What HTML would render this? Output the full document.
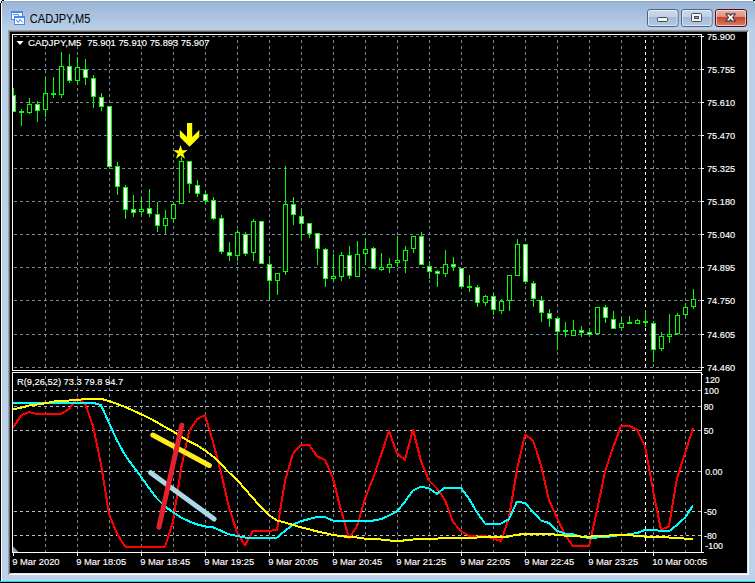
<!DOCTYPE html>
<html><head><meta charset="utf-8"><title>CADJPY,M5</title>
<style>html,body{margin:0;padding:0;background:#000;overflow:hidden}svg{display:block}text{font-family:"Liberation Sans",Arial,sans-serif}</style></head><body>
<svg width="755" height="583" viewBox="0 0 755 583">
<defs>
<linearGradient id="fr" x1="0" y1="0" x2="0" y2="1" gradientUnits="objectBoundingBox"><stop offset="0" stop-color="#98b3d3"/><stop offset="0.0515" stop-color="#bad0ea"/><stop offset="1" stop-color="#bcd1ea"/></linearGradient>
<linearGradient id="bt" x1="0" y1="0" x2="0" y2="1"><stop offset="0" stop-color="#c9d9ec"/><stop offset="0.44" stop-color="#bfd1e7"/><stop offset="0.45" stop-color="#a3bad6"/><stop offset="1" stop-color="#b4c9e2"/></linearGradient>
<linearGradient id="cl" x1="0" y1="0" x2="0" y2="1"><stop offset="0" stop-color="#edb3a6"/><stop offset="0.44" stop-color="#de8f7e"/><stop offset="0.45" stop-color="#c0442a"/><stop offset="1" stop-color="#dc8068"/></linearGradient>
<clipPath id="mc"><rect x="13" y="35" width="688" height="335"/></clipPath>
<clipPath id="ic"><rect x="13" y="373" width="688" height="179"/></clipPath>
</defs>
<rect x="0" y="0" width="755" height="583" fill="url(#fr)"/>
<g shape-rendering="crispEdges">
<rect x="0" y="1" width="755" height="1" fill="#90abcc"/>
<rect x="0" y="0" width="755" height="1" fill="#fff"/>
<rect x="0" y="0" width="1" height="583" fill="#000"/>
<rect x="1" y="1" width="1" height="580" fill="#fff"/>
<rect x="0" y="581" width="755" height="1" fill="#22d8f2"/>
<rect x="0" y="582" width="755" height="1" fill="#000"/>
<rect x="0" y="0" width="2" height="3" fill="#e8f0fa"/><rect x="2" y="0" width="2" height="1" fill="#000"/><rect x="1" y="1" width="1" height="2" fill="#000"/><rect x="2" y="1" width="1" height="1" fill="#fff"/>
<rect x="753" y="0" width="2" height="1" fill="#000"/><rect x="754" y="1" width="1" height="2" fill="#b0eef6"/>
<rect x="8" y="30" width="741" height="545" fill="#a0a0a0"/>
<rect x="9" y="31" width="740" height="544" fill="#fff"/>
<rect x="9" y="31" width="739" height="543" fill="#696969"/>
<rect x="10" y="32" width="738" height="542" fill="#e3e3e3"/>
<rect x="10" y="32" width="737" height="541" fill="#000"/>
</g>
<g shape-rendering="crispEdges" stroke="#778899" stroke-width="1" fill="none">
<line x1="14" y1="36.5" x2="701" y2="36.5" stroke-dasharray="3,3"/>
<line x1="14" y1="69.5" x2="701" y2="69.5" stroke-dasharray="3,3"/>
<line x1="14" y1="102.5" x2="701" y2="102.5" stroke-dasharray="3,3"/>
<line x1="14" y1="135.5" x2="701" y2="135.5" stroke-dasharray="3,3"/>
<line x1="14" y1="168.5" x2="701" y2="168.5" stroke-dasharray="3,3"/>
<line x1="14" y1="201.5" x2="701" y2="201.5" stroke-dasharray="3,3"/>
<line x1="14" y1="234.5" x2="701" y2="234.5" stroke-dasharray="3,3"/>
<line x1="14" y1="267.5" x2="701" y2="267.5" stroke-dasharray="3,3"/>
<line x1="14" y1="300.5" x2="701" y2="300.5" stroke-dasharray="3,3"/>
<line x1="14" y1="334.5" x2="701" y2="334.5" stroke-dasharray="3,3"/>
<line x1="14" y1="367.5" x2="701" y2="367.5" stroke-dasharray="3,3"/>
<line x1="14" y1="390.5" x2="701" y2="390.5" stroke="#c0c0c0" stroke-dasharray="3,3"/>
<line x1="14" y1="406.5" x2="701" y2="406.5" stroke="#c0c0c0" stroke-dasharray="3,3"/>
<line x1="14" y1="430.5" x2="701" y2="430.5" stroke="#c0c0c0" stroke-dasharray="3,3"/>
<line x1="14" y1="471.5" x2="701" y2="471.5" stroke="#c0c0c0" stroke-dasharray="3,3"/>
<line x1="14" y1="511.5" x2="701" y2="511.5" stroke="#c0c0c0" stroke-dasharray="3,3"/>
<line x1="14" y1="535.5" x2="701" y2="535.5" stroke="#c0c0c0" stroke-dasharray="3,3"/>
<line x1="45.5" y1="40" x2="45.5" y2="370" stroke-dasharray="3,3"/>
<line x1="45.5" y1="376" x2="45.5" y2="552" stroke-dasharray="3,3"/>
<line x1="77.5" y1="40" x2="77.5" y2="370" stroke-dasharray="3,3"/>
<line x1="77.5" y1="376" x2="77.5" y2="552" stroke-dasharray="3,3"/>
<line x1="109.5" y1="40" x2="109.5" y2="370" stroke-dasharray="3,3"/>
<line x1="109.5" y1="376" x2="109.5" y2="552" stroke-dasharray="3,3"/>
<line x1="141.5" y1="40" x2="141.5" y2="370" stroke-dasharray="3,3"/>
<line x1="141.5" y1="376" x2="141.5" y2="552" stroke-dasharray="3,3"/>
<line x1="173.5" y1="40" x2="173.5" y2="370" stroke-dasharray="3,3"/>
<line x1="173.5" y1="376" x2="173.5" y2="552" stroke-dasharray="3,3"/>
<line x1="205.5" y1="40" x2="205.5" y2="370" stroke-dasharray="3,3"/>
<line x1="205.5" y1="376" x2="205.5" y2="552" stroke-dasharray="3,3"/>
<line x1="237.5" y1="40" x2="237.5" y2="370" stroke-dasharray="3,3"/>
<line x1="237.5" y1="376" x2="237.5" y2="552" stroke-dasharray="3,3"/>
<line x1="269.5" y1="40" x2="269.5" y2="370" stroke-dasharray="3,3"/>
<line x1="269.5" y1="376" x2="269.5" y2="552" stroke-dasharray="3,3"/>
<line x1="301.5" y1="40" x2="301.5" y2="370" stroke-dasharray="3,3"/>
<line x1="301.5" y1="376" x2="301.5" y2="552" stroke-dasharray="3,3"/>
<line x1="333.5" y1="40" x2="333.5" y2="370" stroke-dasharray="3,3"/>
<line x1="333.5" y1="376" x2="333.5" y2="552" stroke-dasharray="3,3"/>
<line x1="365.5" y1="40" x2="365.5" y2="370" stroke-dasharray="3,3"/>
<line x1="365.5" y1="376" x2="365.5" y2="552" stroke-dasharray="3,3"/>
<line x1="397.5" y1="40" x2="397.5" y2="370" stroke-dasharray="3,3"/>
<line x1="397.5" y1="376" x2="397.5" y2="552" stroke-dasharray="3,3"/>
<line x1="429.5" y1="40" x2="429.5" y2="370" stroke-dasharray="3,3"/>
<line x1="429.5" y1="376" x2="429.5" y2="552" stroke-dasharray="3,3"/>
<line x1="461.5" y1="40" x2="461.5" y2="370" stroke-dasharray="3,3"/>
<line x1="461.5" y1="376" x2="461.5" y2="552" stroke-dasharray="3,3"/>
<line x1="493.5" y1="40" x2="493.5" y2="370" stroke-dasharray="3,3"/>
<line x1="493.5" y1="376" x2="493.5" y2="552" stroke-dasharray="3,3"/>
<line x1="525.5" y1="40" x2="525.5" y2="370" stroke-dasharray="3,3"/>
<line x1="525.5" y1="376" x2="525.5" y2="552" stroke-dasharray="3,3"/>
<line x1="557.5" y1="40" x2="557.5" y2="370" stroke-dasharray="3,3"/>
<line x1="557.5" y1="376" x2="557.5" y2="552" stroke-dasharray="3,3"/>
<line x1="589.5" y1="40" x2="589.5" y2="370" stroke-dasharray="3,3"/>
<line x1="589.5" y1="376" x2="589.5" y2="552" stroke-dasharray="3,3"/>
<line x1="621.5" y1="40" x2="621.5" y2="370" stroke-dasharray="3,3"/>
<line x1="621.5" y1="376" x2="621.5" y2="552" stroke-dasharray="3,3"/>
<line x1="653.5" y1="40" x2="653.5" y2="370" stroke-dasharray="3,3"/>
<line x1="653.5" y1="376" x2="653.5" y2="552" stroke-dasharray="3,3"/>
<line x1="685.5" y1="40" x2="685.5" y2="370" stroke-dasharray="3,3"/>
<line x1="685.5" y1="376" x2="685.5" y2="552" stroke-dasharray="3,3"/>
<line x1="645.5" y1="40" x2="645.5" y2="370" stroke="#fff" stroke-dasharray="3,3"/>
<line x1="645.5" y1="376" x2="645.5" y2="552" stroke="#fff" stroke-dasharray="3,3"/>
</g>
<g shape-rendering="crispEdges" clip-path="url(#mc)">
<rect x="13" y="88" width="1" height="24" fill="#0f0"/>
<rect x="11" y="95" width="5" height="17" fill="#0f0"/>
<rect x="12" y="96" width="3" height="15" fill="#fff"/>
<rect x="21" y="109" width="1" height="17" fill="#0f0"/>
<rect x="19" y="111" width="5" height="2" fill="#0f0"/>
<rect x="29" y="98" width="1" height="16" fill="#0f0"/>
<rect x="27" y="104" width="5" height="9" fill="#0f0"/>
<rect x="28" y="105" width="3" height="7" fill="#000"/>
<rect x="37" y="101" width="1" height="21" fill="#0f0"/>
<rect x="35" y="104" width="5" height="7" fill="#0f0"/>
<rect x="36" y="105" width="3" height="5" fill="#fff"/>
<rect x="45" y="78" width="1" height="39" fill="#0f0"/>
<rect x="43" y="93" width="5" height="17" fill="#0f0"/>
<rect x="44" y="94" width="3" height="15" fill="#000"/>
<rect x="53" y="77" width="1" height="21" fill="#0f0"/>
<rect x="51" y="93" width="5" height="2" fill="#0f0"/>
<rect x="61" y="52" width="1" height="46" fill="#0f0"/>
<rect x="59" y="66" width="5" height="29" fill="#0f0"/>
<rect x="60" y="67" width="3" height="27" fill="#000"/>
<rect x="69" y="54" width="1" height="29" fill="#0f0"/>
<rect x="67" y="66" width="5" height="15" fill="#0f0"/>
<rect x="68" y="67" width="3" height="13" fill="#fff"/>
<rect x="77" y="57" width="1" height="28" fill="#0f0"/>
<rect x="75" y="67" width="5" height="14" fill="#0f0"/>
<rect x="76" y="68" width="3" height="12" fill="#000"/>
<rect x="85" y="59" width="1" height="26" fill="#0f0"/>
<rect x="83" y="69" width="5" height="9" fill="#0f0"/>
<rect x="84" y="70" width="3" height="7" fill="#fff"/>
<rect x="93" y="75" width="1" height="33" fill="#0f0"/>
<rect x="91" y="78" width="5" height="19" fill="#0f0"/>
<rect x="92" y="79" width="3" height="17" fill="#fff"/>
<rect x="101" y="93" width="1" height="18" fill="#0f0"/>
<rect x="99" y="97" width="5" height="10" fill="#0f0"/>
<rect x="100" y="98" width="3" height="8" fill="#fff"/>
<rect x="109" y="106" width="1" height="61" fill="#0f0"/>
<rect x="107" y="106" width="5" height="61" fill="#0f0"/>
<rect x="108" y="107" width="3" height="59" fill="#fff"/>
<rect x="117" y="162" width="1" height="33" fill="#0f0"/>
<rect x="115" y="166" width="5" height="21" fill="#0f0"/>
<rect x="116" y="167" width="3" height="19" fill="#fff"/>
<rect x="125" y="185" width="1" height="34" fill="#0f0"/>
<rect x="123" y="187" width="5" height="23" fill="#0f0"/>
<rect x="124" y="188" width="3" height="21" fill="#fff"/>
<rect x="133" y="195" width="1" height="22" fill="#0f0"/>
<rect x="131" y="209" width="5" height="4" fill="#0f0"/>
<rect x="132" y="210" width="3" height="2" fill="#fff"/>
<rect x="141" y="198" width="1" height="18" fill="#0f0"/>
<rect x="139" y="209" width="5" height="3" fill="#0f0"/>
<rect x="140" y="210" width="3" height="1" fill="#000"/>
<rect x="149" y="189" width="1" height="28" fill="#0f0"/>
<rect x="147" y="208" width="5" height="6" fill="#0f0"/>
<rect x="148" y="209" width="3" height="4" fill="#fff"/>
<rect x="157" y="202" width="1" height="30" fill="#0f0"/>
<rect x="155" y="214" width="5" height="12" fill="#0f0"/>
<rect x="156" y="215" width="3" height="10" fill="#fff"/>
<rect x="165" y="210" width="1" height="24" fill="#0f0"/>
<rect x="163" y="218" width="5" height="8" fill="#0f0"/>
<rect x="164" y="219" width="3" height="6" fill="#000"/>
<rect x="173" y="202" width="1" height="20" fill="#0f0"/>
<rect x="171" y="204" width="5" height="15" fill="#0f0"/>
<rect x="172" y="205" width="3" height="13" fill="#000"/>
<rect x="181" y="157" width="1" height="47" fill="#0f0"/>
<rect x="179" y="161" width="5" height="43" fill="#0f0"/>
<rect x="180" y="162" width="3" height="41" fill="#000"/>
<rect x="189" y="161" width="1" height="32" fill="#0f0"/>
<rect x="187" y="161" width="5" height="23" fill="#0f0"/>
<rect x="188" y="162" width="3" height="21" fill="#fff"/>
<rect x="197" y="180" width="1" height="17" fill="#0f0"/>
<rect x="195" y="185" width="5" height="9" fill="#0f0"/>
<rect x="196" y="186" width="3" height="7" fill="#fff"/>
<rect x="205" y="191" width="1" height="13" fill="#0f0"/>
<rect x="203" y="194" width="5" height="7" fill="#0f0"/>
<rect x="204" y="195" width="3" height="5" fill="#fff"/>
<rect x="213" y="197" width="1" height="23" fill="#0f0"/>
<rect x="211" y="200" width="5" height="19" fill="#0f0"/>
<rect x="212" y="201" width="3" height="17" fill="#fff"/>
<rect x="221" y="215" width="1" height="39" fill="#0f0"/>
<rect x="219" y="218" width="5" height="34" fill="#0f0"/>
<rect x="220" y="219" width="3" height="32" fill="#fff"/>
<rect x="229" y="242" width="1" height="19" fill="#0f0"/>
<rect x="227" y="252" width="5" height="4" fill="#0f0"/>
<rect x="228" y="253" width="3" height="2" fill="#fff"/>
<rect x="237" y="230" width="1" height="31" fill="#0f0"/>
<rect x="235" y="232" width="5" height="24" fill="#0f0"/>
<rect x="236" y="233" width="3" height="22" fill="#000"/>
<rect x="245" y="232" width="1" height="24" fill="#0f0"/>
<rect x="243" y="234" width="5" height="20" fill="#0f0"/>
<rect x="244" y="235" width="3" height="18" fill="#fff"/>
<rect x="253" y="219" width="1" height="42" fill="#0f0"/>
<rect x="251" y="221" width="5" height="32" fill="#0f0"/>
<rect x="252" y="222" width="3" height="30" fill="#000"/>
<rect x="261" y="221" width="1" height="43" fill="#0f0"/>
<rect x="259" y="221" width="5" height="43" fill="#0f0"/>
<rect x="260" y="222" width="3" height="41" fill="#fff"/>
<rect x="269" y="256" width="1" height="44" fill="#0f0"/>
<rect x="267" y="264" width="5" height="17" fill="#0f0"/>
<rect x="268" y="265" width="3" height="15" fill="#fff"/>
<rect x="277" y="273" width="1" height="22" fill="#0f0"/>
<rect x="275" y="273" width="5" height="8" fill="#0f0"/>
<rect x="276" y="274" width="3" height="6" fill="#000"/>
<rect x="285" y="166" width="1" height="109" fill="#0f0"/>
<rect x="283" y="204" width="5" height="68" fill="#0f0"/>
<rect x="284" y="205" width="3" height="66" fill="#000"/>
<rect x="293" y="197" width="1" height="28" fill="#0f0"/>
<rect x="291" y="204" width="5" height="11" fill="#0f0"/>
<rect x="292" y="205" width="3" height="9" fill="#fff"/>
<rect x="301" y="211" width="1" height="30" fill="#0f0"/>
<rect x="299" y="216" width="5" height="8" fill="#0f0"/>
<rect x="300" y="217" width="3" height="6" fill="#fff"/>
<rect x="309" y="223" width="1" height="15" fill="#0f0"/>
<rect x="307" y="223" width="5" height="11" fill="#0f0"/>
<rect x="308" y="224" width="3" height="9" fill="#fff"/>
<rect x="317" y="233" width="1" height="32" fill="#0f0"/>
<rect x="315" y="233" width="5" height="16" fill="#0f0"/>
<rect x="316" y="234" width="3" height="14" fill="#fff"/>
<rect x="325" y="248" width="1" height="39" fill="#0f0"/>
<rect x="323" y="249" width="5" height="30" fill="#0f0"/>
<rect x="324" y="250" width="3" height="28" fill="#fff"/>
<rect x="333" y="254" width="1" height="27" fill="#0f0"/>
<rect x="331" y="276" width="5" height="3" fill="#0f0"/>
<rect x="332" y="277" width="3" height="1" fill="#000"/>
<rect x="341" y="252" width="1" height="29" fill="#0f0"/>
<rect x="339" y="255" width="5" height="22" fill="#0f0"/>
<rect x="340" y="256" width="3" height="20" fill="#000"/>
<rect x="349" y="246" width="1" height="33" fill="#0f0"/>
<rect x="347" y="255" width="5" height="21" fill="#0f0"/>
<rect x="348" y="256" width="3" height="19" fill="#fff"/>
<rect x="357" y="241" width="1" height="36" fill="#0f0"/>
<rect x="355" y="254" width="5" height="23" fill="#0f0"/>
<rect x="356" y="255" width="3" height="21" fill="#000"/>
<rect x="365" y="238" width="1" height="27" fill="#0f0"/>
<rect x="363" y="249" width="5" height="5" fill="#0f0"/>
<rect x="364" y="250" width="3" height="3" fill="#000"/>
<rect x="373" y="247" width="1" height="22" fill="#0f0"/>
<rect x="371" y="248" width="5" height="21" fill="#0f0"/>
<rect x="372" y="249" width="3" height="19" fill="#fff"/>
<rect x="381" y="253" width="1" height="18" fill="#0f0"/>
<rect x="379" y="267" width="5" height="3" fill="#0f0"/>
<rect x="380" y="268" width="3" height="1" fill="#000"/>
<rect x="389" y="258" width="1" height="15" fill="#0f0"/>
<rect x="387" y="264" width="5" height="4" fill="#0f0"/>
<rect x="388" y="265" width="3" height="2" fill="#000"/>
<rect x="397" y="236" width="1" height="31" fill="#0f0"/>
<rect x="395" y="260" width="5" height="3" fill="#0f0"/>
<rect x="396" y="261" width="3" height="1" fill="#000"/>
<rect x="405" y="246" width="1" height="27" fill="#0f0"/>
<rect x="403" y="250" width="5" height="11" fill="#0f0"/>
<rect x="404" y="251" width="3" height="9" fill="#000"/>
<rect x="413" y="236" width="1" height="17" fill="#0f0"/>
<rect x="411" y="236" width="5" height="13" fill="#0f0"/>
<rect x="412" y="237" width="3" height="11" fill="#000"/>
<rect x="421" y="232" width="1" height="33" fill="#0f0"/>
<rect x="419" y="236" width="5" height="29" fill="#0f0"/>
<rect x="420" y="237" width="3" height="27" fill="#fff"/>
<rect x="429" y="261" width="1" height="18" fill="#0f0"/>
<rect x="427" y="266" width="5" height="6" fill="#0f0"/>
<rect x="428" y="267" width="3" height="4" fill="#fff"/>
<rect x="437" y="270" width="1" height="17" fill="#0f0"/>
<rect x="435" y="271" width="5" height="3" fill="#0f0"/>
<rect x="436" y="272" width="3" height="1" fill="#fff"/>
<rect x="445" y="250" width="1" height="27" fill="#0f0"/>
<rect x="443" y="264" width="5" height="10" fill="#0f0"/>
<rect x="444" y="265" width="3" height="8" fill="#000"/>
<rect x="453" y="257" width="1" height="14" fill="#0f0"/>
<rect x="451" y="264" width="5" height="3" fill="#0f0"/>
<rect x="452" y="265" width="3" height="1" fill="#fff"/>
<rect x="461" y="268" width="1" height="21" fill="#0f0"/>
<rect x="459" y="268" width="5" height="19" fill="#0f0"/>
<rect x="460" y="269" width="3" height="17" fill="#fff"/>
<rect x="469" y="275" width="1" height="17" fill="#0f0"/>
<rect x="467" y="286" width="5" height="2" fill="#0f0"/>
<rect x="477" y="285" width="1" height="22" fill="#0f0"/>
<rect x="475" y="287" width="5" height="16" fill="#0f0"/>
<rect x="476" y="288" width="3" height="14" fill="#fff"/>
<rect x="485" y="295" width="1" height="11" fill="#0f0"/>
<rect x="483" y="296" width="5" height="7" fill="#0f0"/>
<rect x="484" y="297" width="3" height="5" fill="#000"/>
<rect x="493" y="293" width="1" height="22" fill="#0f0"/>
<rect x="491" y="296" width="5" height="14" fill="#0f0"/>
<rect x="492" y="297" width="3" height="12" fill="#fff"/>
<rect x="501" y="299" width="1" height="15" fill="#0f0"/>
<rect x="499" y="301" width="5" height="10" fill="#0f0"/>
<rect x="500" y="302" width="3" height="8" fill="#000"/>
<rect x="509" y="275" width="1" height="36" fill="#0f0"/>
<rect x="507" y="275" width="5" height="26" fill="#0f0"/>
<rect x="508" y="276" width="3" height="24" fill="#000"/>
<rect x="517" y="239" width="1" height="37" fill="#0f0"/>
<rect x="515" y="244" width="5" height="32" fill="#0f0"/>
<rect x="516" y="245" width="3" height="30" fill="#000"/>
<rect x="525" y="244" width="1" height="40" fill="#0f0"/>
<rect x="523" y="244" width="5" height="38" fill="#0f0"/>
<rect x="524" y="245" width="3" height="36" fill="#fff"/>
<rect x="533" y="281" width="1" height="26" fill="#0f0"/>
<rect x="531" y="283" width="5" height="16" fill="#0f0"/>
<rect x="532" y="284" width="3" height="14" fill="#fff"/>
<rect x="541" y="296" width="1" height="26" fill="#0f0"/>
<rect x="539" y="300" width="5" height="13" fill="#0f0"/>
<rect x="540" y="301" width="3" height="11" fill="#fff"/>
<rect x="549" y="309" width="1" height="18" fill="#0f0"/>
<rect x="547" y="313" width="5" height="6" fill="#0f0"/>
<rect x="548" y="314" width="3" height="4" fill="#fff"/>
<rect x="557" y="317" width="1" height="33" fill="#0f0"/>
<rect x="555" y="318" width="5" height="14" fill="#0f0"/>
<rect x="556" y="319" width="3" height="12" fill="#fff"/>
<rect x="565" y="322" width="1" height="15" fill="#0f0"/>
<rect x="563" y="330" width="5" height="2" fill="#0f0"/>
<rect x="573" y="320" width="1" height="16" fill="#0f0"/>
<rect x="571" y="330" width="5" height="6" fill="#0f0"/>
<rect x="572" y="331" width="3" height="4" fill="#000"/>
<rect x="581" y="326" width="1" height="11" fill="#0f0"/>
<rect x="579" y="330" width="5" height="3" fill="#0f0"/>
<rect x="580" y="331" width="3" height="1" fill="#fff"/>
<rect x="589" y="328" width="1" height="7" fill="#0f0"/>
<rect x="587" y="332" width="5" height="3" fill="#0f0"/>
<rect x="588" y="333" width="3" height="1" fill="#fff"/>
<rect x="597" y="307" width="1" height="27" fill="#0f0"/>
<rect x="595" y="307" width="5" height="27" fill="#0f0"/>
<rect x="596" y="308" width="3" height="25" fill="#000"/>
<rect x="605" y="305" width="1" height="18" fill="#0f0"/>
<rect x="603" y="307" width="5" height="11" fill="#0f0"/>
<rect x="604" y="308" width="3" height="9" fill="#fff"/>
<rect x="613" y="311" width="1" height="18" fill="#0f0"/>
<rect x="611" y="319" width="5" height="10" fill="#0f0"/>
<rect x="612" y="320" width="3" height="8" fill="#fff"/>
<rect x="621" y="317" width="1" height="13" fill="#0f0"/>
<rect x="619" y="323" width="5" height="5" fill="#0f0"/>
<rect x="620" y="324" width="3" height="3" fill="#000"/>
<rect x="629" y="316" width="1" height="8" fill="#0f0"/>
<rect x="627" y="322" width="5" height="2" fill="#0f0"/>
<rect x="637" y="319" width="1" height="5" fill="#0f0"/>
<rect x="635" y="320" width="5" height="4" fill="#0f0"/>
<rect x="636" y="321" width="3" height="2" fill="#000"/>
<rect x="645" y="310" width="1" height="17" fill="#0f0"/>
<rect x="643" y="321" width="5" height="2" fill="#0f0"/>
<rect x="653" y="321" width="1" height="41" fill="#0f0"/>
<rect x="651" y="323" width="5" height="27" fill="#0f0"/>
<rect x="652" y="324" width="3" height="25" fill="#fff"/>
<rect x="661" y="332" width="1" height="19" fill="#0f0"/>
<rect x="659" y="336" width="5" height="13" fill="#0f0"/>
<rect x="660" y="337" width="3" height="11" fill="#000"/>
<rect x="669" y="314" width="1" height="29" fill="#0f0"/>
<rect x="667" y="334" width="5" height="3" fill="#0f0"/>
<rect x="668" y="335" width="3" height="1" fill="#000"/>
<rect x="677" y="313" width="1" height="22" fill="#0f0"/>
<rect x="675" y="315" width="5" height="19" fill="#0f0"/>
<rect x="676" y="316" width="3" height="17" fill="#000"/>
<rect x="685" y="303" width="1" height="14" fill="#0f0"/>
<rect x="683" y="307" width="5" height="8" fill="#0f0"/>
<rect x="684" y="308" width="3" height="6" fill="#000"/>
<rect x="693" y="289" width="1" height="20" fill="#0f0"/>
<rect x="691" y="299" width="5" height="8" fill="#0f0"/>
<rect x="692" y="300" width="3" height="6" fill="#000"/>
</g>
<polygon points="187,123 192.2,123 192.2,137 199.3,130 199.3,137 189.6,146.8 179.8,137 179.8,130 187,137" fill="#ff0"/>
<polygon points="180.5,145.0 182.2,150.2 187.7,150.3 183.3,153.5 185.0,158.7 180.5,155.5 176.0,158.7 177.7,153.5 173.3,150.3 178.8,150.2" fill="#ff0"/>
<g clip-path="url(#ic)">
<polyline points="13,427.5 21,415.5 29,412.0 37,414.0 45,414.0 53,414.0 61,414.0 69,409.0 77,398.5 85,403.0 93,426.0 101,464.0 109,514.0 117,533.7 125,546.5 133,546.5 141,546.5 149,546.5 157,546.5 165,546.5 173,522.0 181,469.0 189,431.6 197,419.2 205,415.0 213,441.9 221,472.5 229,507.4 237,532.2 245,545.3 253,530.8 261,530.8 269,530.8 277,530.0 285,481.0 293,453.5 301,444.8 309,444.8 317,456.4 325,459.9 333,478.3 341,510.4 349,538.0 357,526.4 365,498.7 373,478.3 381,455.0 389,430.8 397,453.5 405,459.9 413,429.6 421,461.4 429,480.6 437,488.5 445,500.2 453,522.0 461,531.4 469,535.7 477,536.6 485,536.0 493,538.3 501,541.0 509,517.7 517,469.5 525,434.6 533,440.4 541,465.2 549,500.2 557,517.7 565,535.1 573,546.2 581,546.2 589,546.2 597,510.4 605,471.9 613,447.7 621,425.8 629,425.8 637,429.6 645,446.2 653,490.0 661,529.9 669,526.4 677,478.3 685,453.5 693,428.1" fill="none" stroke="#f00" stroke-width="2" stroke-linejoin="round" shape-rendering="crispEdges"/>
<polyline points="13,402.6 21,402.6 29,402.6 37,402.6 45,402.6 53,402.6 61,402.6 69,402.6 77,402.6 85,402.6 93,402.8 101,405.0 109,422.9 117,440.4 125,455.0 133,466.0 141,476.8 149,488.0 157,498.5 165,506.5 173,512.2 181,517.5 189,521.3 197,524.4 205,526.4 213,527.3 221,530.8 229,534.3 237,536.0 245,537.5 253,537.5 261,537.5 269,537.5 277,537.5 285,530.8 293,524.6 301,521.2 309,519.1 317,517.1 325,517.1 333,520.6 341,521.4 349,521.4 357,521.4 365,520.6 373,520.6 381,519.1 389,515.6 397,511.4 405,501.6 413,490.5 421,486.5 429,488.5 437,493.7 445,487.6 453,487.6 461,487.9 469,498.7 477,512.4 485,523.5 493,523.5 501,523.5 509,519.1 517,501.6 525,503.1 533,511.8 541,520.6 549,522.9 557,530.8 565,533.7 573,534.3 581,536.6 589,538.0 597,537.5 605,537.2 613,536.0 621,535.1 629,534.3 637,533.1 645,529.9 653,529.9 661,530.8 669,531.4 677,524.9 685,517.7 693,505.4" fill="none" stroke="#0ff" stroke-width="2" stroke-linejoin="round" shape-rendering="crispEdges"/>
<polyline points="13,409.1 21,407.8 29,405.5 37,404.5 45,403.3 53,401.6 61,400.9 69,400.5 77,400.0 85,399.0 93,398.8 101,398.8 109,401.0 117,404.0 125,406.9 133,410.5 141,414.2 149,417.9 157,422.3 165,427.0 173,431.4 181,436.5 189,441.3 197,445.3 205,450.6 213,456.4 221,464.3 229,472.5 237,479.8 245,489.0 253,498.1 261,507.4 269,515.3 277,520.6 285,522.6 293,525.0 301,527.3 309,529.3 317,531.4 325,533.1 333,535.1 341,536.0 349,537.2 357,537.5 365,538.6 373,538.9 381,539.5 389,540.4 397,541.0 405,540.4 413,539.5 421,538.9 429,538.9 437,538.6 445,538.0 453,538.0 461,537.5 469,537.5 477,537.5 485,537.2 493,537.4 501,537.5 509,536.6 517,534.6 525,534.3 533,534.3 541,534.3 549,534.3 557,534.6 565,535.7 573,536.0 581,536.6 589,536.6 597,536.2 605,536.0 613,535.1 621,534.6 629,535.1 637,536.0 645,536.6 653,537.2 661,537.2 669,537.5 677,538.0 685,538.6 693,538.6" fill="none" stroke="#ff0" stroke-width="2" stroke-linejoin="round" shape-rendering="crispEdges"/>
<line x1="152.8" y1="435" x2="209.4" y2="465.5" stroke="#ffec1e" stroke-width="5" stroke-linecap="round"/>
<line x1="150.7" y1="472.7" x2="214.1" y2="519" stroke="#a9d9e8" stroke-width="5" stroke-linecap="round"/>
<line x1="181.8" y1="425.3" x2="158.9" y2="527.2" stroke="#e9212d" stroke-width="5" stroke-linecap="round"/>
</g>
<g shape-rendering="crispEdges" fill="#fff">
<rect x="12" y="34" width="690" height="1"/>
<rect x="12" y="34" width="1" height="519"/>
<rect x="701" y="34" width="1" height="519"/>
<rect x="12" y="370" width="690" height="1"/>
<rect x="12" y="371" width="690" height="1" fill="#000"/>
<rect x="12" y="372" width="690" height="1"/>
<rect x="702" y="374" width="1" height="1"/>
<rect x="12" y="552" width="692" height="1"/>
<rect x="702" y="36" width="2" height="1"/>
<rect x="702" y="69" width="2" height="1"/>
<rect x="702" y="102" width="2" height="1"/>
<rect x="702" y="135" width="2" height="1"/>
<rect x="702" y="168" width="2" height="1"/>
<rect x="702" y="201" width="2" height="1"/>
<rect x="702" y="234" width="2" height="1"/>
<rect x="702" y="267" width="2" height="1"/>
<rect x="702" y="300" width="2" height="1"/>
<rect x="702" y="334" width="2" height="1"/>
<rect x="702" y="367" width="2" height="1"/>
<rect x="13" y="553" width="1" height="3"/>
<rect x="77" y="553" width="1" height="3"/>
<rect x="141" y="553" width="1" height="3"/>
<rect x="205" y="553" width="1" height="3"/>
<rect x="269" y="553" width="1" height="3"/>
<rect x="333" y="553" width="1" height="3"/>
<rect x="397" y="553" width="1" height="3"/>
<rect x="461" y="553" width="1" height="3"/>
<rect x="525" y="553" width="1" height="3"/>
<rect x="589" y="553" width="1" height="3"/>
<rect x="653" y="553" width="1" height="3"/>
</g>
<polygon points="13,546.5 18.5,552 13,552" fill="#8a9bb0"/>
<text transform="translate(707.0,40.0) scale(0.941,1)" font-size="9.8" fill="#fff" stroke="#fff" stroke-width="0.15" >75.900</text>
<text transform="translate(707.0,73.0) scale(0.941,1)" font-size="9.8" fill="#fff" stroke="#fff" stroke-width="0.15" >75.755</text>
<text transform="translate(707.0,106.0) scale(0.941,1)" font-size="9.8" fill="#fff" stroke="#fff" stroke-width="0.15" >75.610</text>
<text transform="translate(707.0,139.0) scale(0.941,1)" font-size="9.8" fill="#fff" stroke="#fff" stroke-width="0.15" >75.470</text>
<text transform="translate(707.0,172.0) scale(0.941,1)" font-size="9.8" fill="#fff" stroke="#fff" stroke-width="0.15" >75.325</text>
<text transform="translate(707.0,205.0) scale(0.941,1)" font-size="9.8" fill="#fff" stroke="#fff" stroke-width="0.15" >75.180</text>
<text transform="translate(707.0,238.0) scale(0.941,1)" font-size="9.8" fill="#fff" stroke="#fff" stroke-width="0.15" >75.040</text>
<text transform="translate(707.0,271.0) scale(0.941,1)" font-size="9.8" fill="#fff" stroke="#fff" stroke-width="0.15" >74.895</text>
<text transform="translate(707.0,304.0) scale(0.941,1)" font-size="9.8" fill="#fff" stroke="#fff" stroke-width="0.15" >74.750</text>
<text transform="translate(707.0,338.0) scale(0.941,1)" font-size="9.8" fill="#fff" stroke="#fff" stroke-width="0.15" >74.605</text>
<text transform="translate(707.0,371.0) scale(0.941,1)" font-size="9.8" fill="#fff" stroke="#fff" stroke-width="0.15" >74.460</text>
<text transform="translate(705.0,383.0) scale(0.903,1)" font-size="9.8" fill="#fff" stroke="#fff" stroke-width="0.15" >120</text>
<text transform="translate(704.1,394.0) scale(0.903,1)" font-size="9.8" fill="#fff" stroke="#fff" stroke-width="0.15" >100</text>
<text transform="translate(703.7,410.0) scale(0.903,1)" font-size="9.8" fill="#fff" stroke="#fff" stroke-width="0.15" >80</text>
<text transform="translate(703.7,434.0) scale(0.903,1)" font-size="9.8" fill="#fff" stroke="#fff" stroke-width="0.15" >50</text>
<text transform="translate(705.2,475.0) scale(0.903,1)" font-size="9.8" fill="#fff" stroke="#fff" stroke-width="0.15" >0.00</text>
<text transform="translate(704.0,515.0) scale(0.903,1)" font-size="9.8" fill="#fff" stroke="#fff" stroke-width="0.15" >-50</text>
<text transform="translate(704.0,539.0) scale(0.903,1)" font-size="9.8" fill="#fff" stroke="#fff" stroke-width="0.15" >-80</text>
<text transform="translate(705.3,548.8) scale(0.903,1)" font-size="9.8" fill="#fff" stroke="#fff" stroke-width="0.15" >-100</text>
<text transform="translate(12.3,565.0) scale(0.954,1)" font-size="9.8" fill="#fff" stroke="#fff" stroke-width="0.15" >9 Mar 2020</text>
<text transform="translate(76.3,565.0) scale(0.954,1)" font-size="9.8" fill="#fff" stroke="#fff" stroke-width="0.15" >9 Mar 18:05</text>
<text transform="translate(140.3,565.0) scale(0.954,1)" font-size="9.8" fill="#fff" stroke="#fff" stroke-width="0.15" >9 Mar 18:45</text>
<text transform="translate(204.3,565.0) scale(0.954,1)" font-size="9.8" fill="#fff" stroke="#fff" stroke-width="0.15" >9 Mar 19:25</text>
<text transform="translate(268.3,565.0) scale(0.954,1)" font-size="9.8" fill="#fff" stroke="#fff" stroke-width="0.15" >9 Mar 20:05</text>
<text transform="translate(332.3,565.0) scale(0.954,1)" font-size="9.8" fill="#fff" stroke="#fff" stroke-width="0.15" >9 Mar 20:45</text>
<text transform="translate(396.3,565.0) scale(0.954,1)" font-size="9.8" fill="#fff" stroke="#fff" stroke-width="0.15" >9 Mar 21:25</text>
<text transform="translate(460.3,565.0) scale(0.954,1)" font-size="9.8" fill="#fff" stroke="#fff" stroke-width="0.15" >9 Mar 22:05</text>
<text transform="translate(524.3,565.0) scale(0.954,1)" font-size="9.8" fill="#fff" stroke="#fff" stroke-width="0.15" >9 Mar 22:45</text>
<text transform="translate(588.3,565.0) scale(0.954,1)" font-size="9.8" fill="#fff" stroke="#fff" stroke-width="0.15" >9 Mar 23:25</text>
<text transform="translate(652.3,565.0) scale(0.954,1)" font-size="9.8" fill="#fff" stroke="#fff" stroke-width="0.15" >10 Mar 00:05</text>
<polygon points="16.5,41 23.5,41 20,45" fill="#fff"/>
<text transform="translate(28.0,46.0) scale(0.995,1)" font-size="9.8" fill="#fff" stroke="#fff" stroke-width="0.15" >CADJPY,M5</text>
<text transform="translate(87.2,46.0) scale(0.955,1)" font-size="9.8" fill="#fff" stroke="#fff" stroke-width="0.15" >75.901 75.910 75.893 75.907</text>
<text transform="translate(17.0,385.0) scale(0.952,1)" font-size="9.8" fill="#fff" stroke="#fff" stroke-width="0.15" >R(9,26,52) 73.3 79.8 94.7</text>
<text x="29.8" y="22.6" font-size="12.6" fill="#000" textLength="60.6" lengthAdjust="spacingAndGlyphs">CADJPY,M5</text>
<g shape-rendering="crispEdges">
<rect x="11" y="11" width="12" height="9" fill="#4a86f0"/><rect x="12" y="13" width="10" height="6" fill="#fff"/>
<rect x="14" y="16" width="11" height="9" fill="#4a86f0"/><rect x="15" y="18" width="9" height="6" fill="#fff"/>
</g>
<polyline points="13,15 14.5,14 15.5,15 17.5,14 19,16" fill="none" stroke="#3b78f0" stroke-width="1"/>
<polyline points="16,19.5 18.2,22.5 20,19.5 22.6,22.5" fill="none" stroke="#3b78f0" stroke-width="1"/>
<rect x="647.5" y="9.5" width="30.6" height="17" rx="2.5" ry="2.5" fill="url(#bt)" stroke="#4f6283" stroke-width="1"/>
<rect x="648.5" y="10.5" width="28.6" height="15" rx="1.5" ry="1.5" fill="none" stroke="#fff" stroke-opacity="0.55" stroke-width="1"/>
<rect x="681.5" y="9.5" width="30.6" height="17" rx="2.5" ry="2.5" fill="url(#bt)" stroke="#4f6283" stroke-width="1"/>
<rect x="682.5" y="10.5" width="28.6" height="15" rx="1.5" ry="1.5" fill="none" stroke="#fff" stroke-opacity="0.55" stroke-width="1"/>
<rect x="715.5" y="9.5" width="31.0" height="17" rx="2.5" ry="2.5" fill="url(#cl)" stroke="#4d0f1e" stroke-width="1"/>
<rect x="716.5" y="10.5" width="29.0" height="15" rx="1.5" ry="1.5" fill="none" stroke="#fff" stroke-opacity="0.55" stroke-width="1"/>
<rect x="657.5" y="17.5" width="10" height="4" rx="1" fill="#f4f4f4" stroke="#444a5a" stroke-width="1"/>
<rect x="691.5" y="13.5" width="10" height="8" rx="1" fill="#f4f4f4" stroke="#444a5a" stroke-width="1"/>
<rect x="694.5" y="16.5" width="4" height="2" fill="#8fa8cc" stroke="#444a5a" stroke-width="1"/>
<polygon points="725.9,13.9 729.5,13.9 730.6,15.6 731.7,13.9 735.3,13.9 732.6,17.5 735.5,21.1 731.8,21.1 730.6,19.4 729.4,21.1 725.7,21.1 728.6,17.5" fill="#fff" stroke="#4a3a44" stroke-width="1.1" stroke-linejoin="round"/>
</svg></body></html>
